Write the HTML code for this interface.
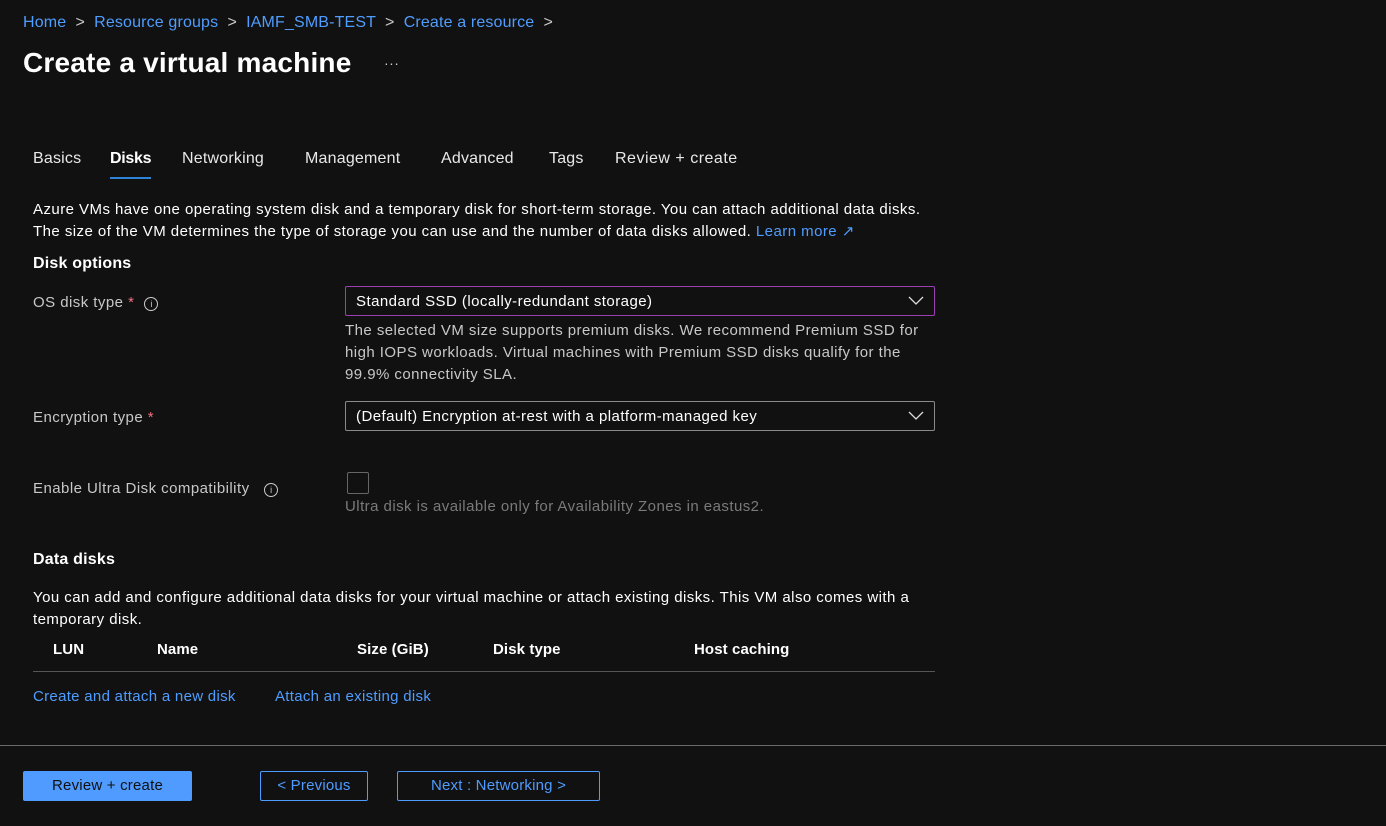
<!DOCTYPE html>
<html><head><meta charset="utf-8"><style>
body{margin:0;width:1386px;height:826px;background:#111111;font-family:"Liberation Sans",sans-serif;color:#fff;position:relative;overflow:hidden;font-size:15px;letter-spacing:0.45px}
.a{position:absolute;white-space:nowrap}
.lnk{color:#4f9dff}
.g{color:#c8c8c8}
.sel{position:absolute;left:345px;width:588px;height:28px;border:1px solid #8a8a8a;border-radius:2px}
.sel span{position:absolute;left:10px;top:6px;color:#fff}
.sel svg{position:absolute;right:10px;top:9px}
.btn{position:absolute;top:771px;height:30px;box-sizing:border-box;border-radius:2px;font-size:15px;text-align:center;line-height:28px;letter-spacing:0.2px}
.req{color:#f1707b}
.info{display:inline-block;width:12px;height:12px;border:1px solid #ccc;border-radius:50%;font-size:9px;line-height:12px;text-align:center;vertical-align:0px;margin-left:10px;color:#ccc;letter-spacing:0}
.h{font-weight:bold;font-size:15px;letter-spacing:0.1px}
.tab{font-size:16px;color:#e8e8e8;letter-spacing:0.2px}
</style></head><body>
<div class="a lnk" style="left:23px;top:14px;font-size:16px;letter-spacing:0.15px">Home <span class="g">&nbsp;&gt;&nbsp;</span> Resource groups <span class="g">&nbsp;&gt;&nbsp;</span> IAMF_SMB-TEST <span class="g">&nbsp;&gt;&nbsp;</span> Create a resource <span class="g">&nbsp;&gt;</span></div>
<div class="a" style="left:23px;top:47px;font-size:28px;font-weight:bold;letter-spacing:0.2px">Create a virtual machine</div>
<div class="a" style="left:384px;top:55px;font-size:14px;color:#ccc">···</div>

<div class="a tab" style="left:33px;top:150px">Basics</div>
<div class="a tab" style="left:110px;top:150px;font-weight:bold;color:#fff;letter-spacing:-0.3px">Disks</div>
<div style="position:absolute;left:110px;top:177px;width:41px;height:2px;background:#2f83d6"></div>
<div class="a tab" style="left:182px;top:150px">Networking</div>
<div class="a tab" style="left:305px;top:150px">Management</div>
<div class="a tab" style="left:441px;top:150px">Advanced</div>
<div class="a tab" style="left:549px;top:150px">Tags</div>
<div class="a tab" style="left:615px;top:150px;letter-spacing:0.5px">Review + create</div>

<div class="a" style="left:33px;top:199px;line-height:22px">Azure VMs have one operating system disk and a temporary disk for short-term storage. You can attach additional data disks.<br>The size of the VM determines the type of storage you can use and the number of data disks allowed. <span class="lnk">Learn more ↗</span></div>
<div class="a" style="left:33px;top:255px;font-size:16px;font-weight:bold;letter-spacing:0.2px">Disk options</div>

<div class="a g" style="left:33px;top:294px">OS disk type <span class="req">*</span><span class="info">i</span></div>
<div class="sel" style="top:286px;border-color:#9b3fb3"><span>Standard SSD (locally-redundant storage)</span><svg width="16" height="10"><path d="M1 1l7 7 7-7" stroke="#ddd" fill="none" stroke-width="1.3"/></svg></div>
<div class="a g" style="left:345px;top:320px;line-height:22px">The selected VM size supports premium disks. We recommend Premium SSD for<br>high IOPS workloads. Virtual machines with Premium SSD disks qualify for the<br>99.9% connectivity SLA.</div>

<div class="a g" style="left:33px;top:409px">Encryption type <span class="req">*</span></div>
<div class="sel" style="top:401px"><span>(Default) Encryption at-rest with a platform-managed key</span><svg width="16" height="10"><path d="M1 1l7 7 7-7" stroke="#ddd" fill="none" stroke-width="1.3"/></svg></div>

<div class="a g" style="left:33px;top:480px">Enable Ultra Disk compatibility <span class="info">i</span></div>
<div style="position:absolute;left:347px;top:472px;width:22px;height:22px;border:1px solid #666;border-radius:2px;box-sizing:border-box"></div>
<div class="a" style="left:345px;top:498px;color:#7a7a7a">Ultra disk is available only for Availability Zones in eastus2.</div>

<div class="a" style="left:33px;top:551px;font-size:16px;font-weight:bold;letter-spacing:0.2px">Data disks</div>
<div class="a" style="left:33px;top:587px;line-height:22px">You can add and configure additional data disks for your virtual machine or attach existing disks. This VM also comes with a<br>temporary disk.</div>
<div class="a h" style="left:53px;top:641px">LUN</div>
<div class="a h" style="left:157px;top:641px">Name</div>
<div class="a h" style="left:357px;top:641px">Size (GiB)</div>
<div class="a h" style="left:493px;top:641px">Disk type</div>
<div class="a h" style="left:694px;top:641px">Host caching</div>
<div style="position:absolute;left:33px;top:671px;width:902px;height:1px;background:#555"></div>
<div class="a lnk" style="left:33px;top:688px;letter-spacing:0.3px">Create and attach a new disk</div>
<div class="a lnk" style="left:275px;top:688px;letter-spacing:0.3px">Attach an existing disk</div>

<div style="position:absolute;left:0;top:745px;width:1386px;height:1px;background:#6a6a6a"></div>
<div class="btn" style="left:23px;width:169px;background:#4f9bff;color:#111;line-height:30px">Review + create</div>
<div class="btn" style="left:260px;width:108px;border:1px solid #4f9bff;color:#4f9bff">&lt; Previous</div>
<div class="btn" style="left:397px;width:203px;border:1px solid #4f9bff;color:#4f9bff">Next : Networking &gt;</div>
</body></html>
